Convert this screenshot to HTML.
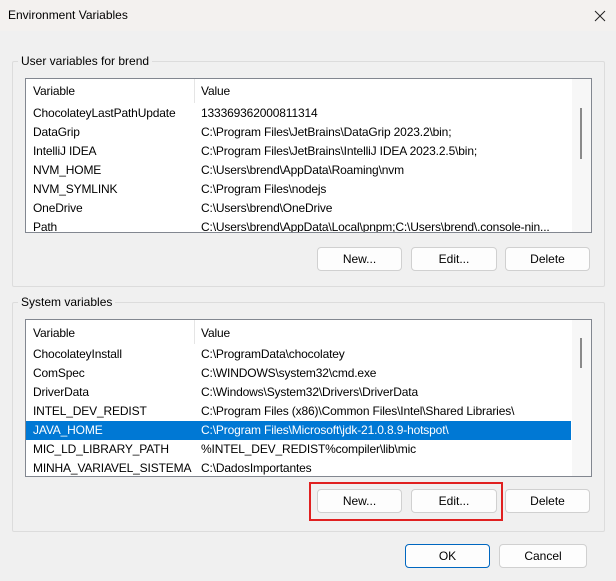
<html><head><style>
body{margin:0;width:616px;height:581px;background:#f0f0f0;font-family:"Liberation Sans",sans-serif;font-size:12px;color:#000;position:relative;overflow:hidden}
.a{position:absolute}
.title{left:0;top:0;width:616px;height:31px;background:#f3f1ef}
.grp{border:1px solid #dcdcdc;border-radius:2px}
.lbl{background:#f0f0f0;padding:0 3px;font-size:12px}
.list{background:#fff;border:1px solid #828790;overflow:hidden}
.row{position:absolute;left:0;width:545px;height:19px;line-height:19px;letter-spacing:-0.15px}
.row span{position:absolute}
.row .v{left:7px}.row .w{left:175px;white-space:nowrap}
.sel{background:#0078d4;color:#fff}
.btn{background:#fdfdfd;border:1px solid #d0d0d0;border-radius:4px;text-align:center;line-height:22px;height:22px;box-sizing:border-box}
.sb{background:#f7f7f7}
</style></head><body>
<div class="a title"></div>
<div class="a" style="left:8px;top:8px">Environment Variables</div>
<svg class="a" style="left:594px;top:10px" width="12" height="12"><path d="M1 1L11 11M11 1L1 11" stroke="#222" stroke-width="1"/></svg>

<div class="a grp" style="left:12px;top:61px;width:591px;height:224px"></div>
<div class="a lbl" style="left:18px;top:54px">User variables for brend</div>
<div class="a list" style="left:25px;top:78px;width:565px;height:153px">
 <div class="a sb" style="left:546px;top:0;width:19px;height:153px"></div>
 <div class="a" style="left:554px;top:29px;width:2px;height:51px;background:#8a8a8a"></div>
 <div class="a" style="left:168px;top:0;width:1px;height:24px;background:#e5e5e5"></div>
 <div class="row" style="top:3px"><span class="v">Variable</span><span class="w">Value</span></div>
 <div class="row" style="top:25px"><span class="v">ChocolateyLastPathUpdate</span><span class="w">133369362000811314</span></div>
 <div class="row" style="top:44px"><span class="v">DataGrip</span><span class="w">C:\Program Files\JetBrains\DataGrip 2023.2\bin;</span></div>
 <div class="row" style="top:63px"><span class="v">IntelliJ IDEA</span><span class="w">C:\Program Files\JetBrains\IntelliJ IDEA 2023.2.5\bin;</span></div>
 <div class="row" style="top:82px"><span class="v">NVM_HOME</span><span class="w">C:\Users\brend\AppData\Roaming\nvm</span></div>
 <div class="row" style="top:101px"><span class="v">NVM_SYMLINK</span><span class="w">C:\Program Files\nodejs</span></div>
 <div class="row" style="top:120px"><span class="v">OneDrive</span><span class="w">C:\Users\brend\OneDrive</span></div>
 <div class="row" style="top:139px"><span class="v">Path</span><span class="w">C:\Users\brend\AppData\Local\pnpm;C:\Users\brend\.console-nin...</span></div>
</div>
<div class="a btn" style="left:317px;top:247px;width:85px;height:24px;line-height:22px">New...</div>
<div class="a btn" style="left:411px;top:247px;width:86px;height:24px;line-height:22px">Edit...</div>
<div class="a btn" style="left:505px;top:247px;width:85px;height:24px;line-height:22px">Delete</div>

<div class="a grp" style="left:12px;top:302px;width:591px;height:228px"></div>
<div class="a lbl" style="left:18px;top:295px">System variables</div>
<div class="a list" style="left:25px;top:319px;width:565px;height:156px">
 <div class="a sb" style="left:546px;top:0;width:19px;height:156px"></div>
 <div class="a" style="left:554px;top:18px;width:2px;height:30px;background:#8a8a8a"></div>
 <div class="a" style="left:168px;top:0;width:1px;height:24px;background:#e5e5e5"></div>
 <div class="row" style="top:4px"><span class="v">Variable</span><span class="w">Value</span></div>
 <div class="row" style="top:25px"><span class="v">ChocolateyInstall</span><span class="w">C:\ProgramData\chocolatey</span></div>
 <div class="row" style="top:44px"><span class="v">ComSpec</span><span class="w">C:\WINDOWS\system32\cmd.exe</span></div>
 <div class="row" style="top:63px"><span class="v">DriverData</span><span class="w">C:\Windows\System32\Drivers\DriverData</span></div>
 <div class="row" style="top:82px"><span class="v">INTEL_DEV_REDIST</span><span class="w">C:\Program Files (x86)\Common Files\Intel\Shared Libraries\</span></div>
 <div class="row sel" style="top:101px"><span class="v">JAVA_HOME</span><span class="w">C:\Program Files\Microsoft\jdk-21.0.8.9-hotspot\</span></div>
 <div class="row" style="top:120px"><span class="v">MIC_LD_LIBRARY_PATH</span><span class="w">%INTEL_DEV_REDIST%compiler\lib\mic</span></div>
 <div class="row" style="top:139px"><span class="v">MINHA_VARIAVEL_SISTEMA</span><span class="w">C:\DadosImportantes</span></div>
</div>
<div class="a" style="left:309px;top:482px;width:190px;height:35px;border:2px solid #e02020"></div>
<div class="a btn" style="left:317px;top:489px;width:85px;height:24px;line-height:22px">New...</div>
<div class="a btn" style="left:411px;top:489px;width:86px;height:24px;line-height:22px">Edit...</div>
<div class="a btn" style="left:505px;top:489px;width:85px;height:24px;line-height:22px">Delete</div>

<div class="a btn" style="left:405px;top:544px;width:85px;height:24px;line-height:22px;border-color:#0067c0">OK</div>
<div class="a btn" style="left:499px;top:544px;width:88px;height:24px;line-height:22px">Cancel</div>
</body></html>
